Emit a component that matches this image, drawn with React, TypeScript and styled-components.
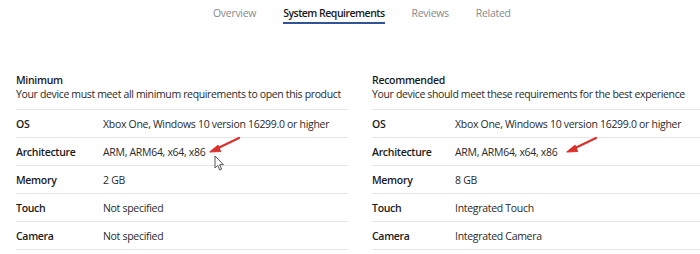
import React from 'react';
import styled, { createGlobalStyle } from 'styled-components';

const GlobalStyle = createGlobalStyle`
  html, body {
    margin: 0;
    padding: 0;
    background: #ffffff;
  }
  body {
    font-family: 'Open Sans', 'Noto Sans', sans-serif;
    font-size: 10.5px;
    letter-spacing: -0.3px;
    color: #1f1f1f;
  }
`;

const Page = styled.div`
  width: 700px;
  height: 254px;
  overflow: hidden;
  position: relative;
`;

const TabBar = styled.nav`
  display: flex;
  gap: 27px;
  padding-left: 213px;
  height: 40px;
  align-items: flex-start;
`;

const Tab = styled.div<{ $active?: boolean }>`
  font-size: 10.5px;
  line-height: 14px;
  padding-top: 6px;
  padding-bottom: 2px;
  color: ${(p) => (p.$active ? '#1a1a1a' : '#8a8a8a')};
  font-weight: ${(p) => (p.$active ? 600 : 400)};
  letter-spacing: ${(p) => (p.$active ? '-0.5px' : '-0.3px')};
  border-bottom: 2px solid ${(p) => (p.$active ? '#2f5597' : 'transparent')};
`;

const Columns = styled.div`
  display: grid;
  grid-template-columns: 332px 1fr;
  column-gap: 24px;
  padding-left: 16px;
  padding-top: 33px;
`;

const Section = styled.section``;

const Heading = styled.div`
  padding-bottom: 8px;
`;

const Title = styled.div`
  line-height: 14px;
  font-weight: 600;
  color: #1a1a1a;
`;

const Subtitle = styled.div`
  line-height: 14px;
  color: #2a2a2a;
  white-space: nowrap;
  letter-spacing: -0.35px;
`;

const Row = styled.div`
  display: flex;
  align-items: center;
  height: 27px;
  border-top: 1px solid #e6e6e6;
`;

const Label = styled.div<{ $width: number }>`
  width: ${(p) => p.$width}px;
  flex: none;
  font-weight: 600;
  color: #1a1a1a;
`;

const Value = styled.div`
  color: #2a2a2a;
  white-space: nowrap;
`;

const Marked = styled.span`
  position: relative;
`;

const Arrow = styled.svg<{ $dx: number }>`
  position: absolute;
  left: calc(100% + ${(p) => p.$dx}px);
  top: -8px;
  overflow: visible;
`;

const Pointer = styled.svg`
  position: absolute;
  left: calc(100% + 9px);
  top: 10px;
`;

const RedArrow: React.FC<{ dx: number }> = ({ dx }) => (
  <Arrow $dx={dx} width="32" height="18" viewBox="0 0 32 18">
    <path d="M30 1 L5 13" stroke="#d9302c" strokeWidth="2.2" strokeLinecap="round" />
    <path d="M1 15 L9 8.5 L11.5 14.5 Z" fill="#d9302c" stroke="#d9302c" strokeWidth="1.2" strokeLinejoin="round" />
  </Arrow>
);

const Cursor = () => (
  <Pointer width="11" height="16" viewBox="0 0 11 16">
    <path
      d="M1 1 L1 13 L3.8 10.4 L5.8 15 L7.6 14.2 L5.6 9.7 L9.4 9.7 Z"
      fill="#ffffff"
      stroke="#444"
      strokeWidth="0.9"
      strokeLinejoin="round"
    />
  </Pointer>
);

type Spec = { label: string; value: string };

const minimum: Spec[] = [
  { label: 'OS', value: 'Xbox One, Windows 10 version 16299.0 or higher' },
  { label: 'Architecture', value: 'ARM, ARM64, x64, x86' },
  { label: 'Memory', value: '2 GB' },
  { label: 'Touch', value: 'Not specified' },
  { label: 'Camera', value: 'Not specified' },
];

const recommended: Spec[] = [
  { label: 'OS', value: 'Xbox One, Windows 10 version 16299.0 or higher' },
  { label: 'Architecture', value: 'ARM, ARM64, x64, x86' },
  { label: 'Memory', value: '8 GB' },
  { label: 'Touch', value: 'Integrated Touch' },
  { label: 'Camera', value: 'Integrated Camera' },
];

const LastRow = styled.div`
  border-top: 1px solid #e6e6e6;
`;

interface ReqProps {
  title: string;
  subtitle: string;
  items: Spec[];
  labelWidth: number;
  arrowDx: number;
  withCursor?: boolean;
}

const Requirements: React.FC<ReqProps> = ({ title, subtitle, items, labelWidth, arrowDx, withCursor }) => (
  <Section>
    <Heading>
      <Title>{title}</Title>
      <Subtitle>{subtitle}</Subtitle>
    </Heading>
    {items.map((it) => (
      <Row key={it.label}>
        <Label $width={labelWidth}>{it.label}</Label>
        <Value>
          {it.label === 'Architecture' ? (
            <Marked>
              {it.value}
              <RedArrow dx={arrowDx} />
              {withCursor && <Cursor />}
            </Marked>
          ) : (
            it.value
          )}
        </Value>
      </Row>
    ))}
    <LastRow />
  </Section>
);

export default function App() {
  return (
    <Page>
      <GlobalStyle />
      <TabBar>
        <Tab>Overview</Tab>
        <Tab $active>System Requirements</Tab>
        <Tab>Reviews</Tab>
        <Tab>Related</Tab>
      </TabBar>
      <Columns>
        <Requirements
          title="Minimum"
          subtitle="Your device must meet all minimum requirements to open this product"
          items={minimum}
          labelWidth={87}
          arrowDx={4}
          withCursor
        />
        <Requirements
          title="Recommended"
          subtitle="Your device should meet these requirements for the best experience"
          items={recommended}
          labelWidth={83}
          arrowDx={9}
        />
      </Columns>
    </Page>
  );
}
